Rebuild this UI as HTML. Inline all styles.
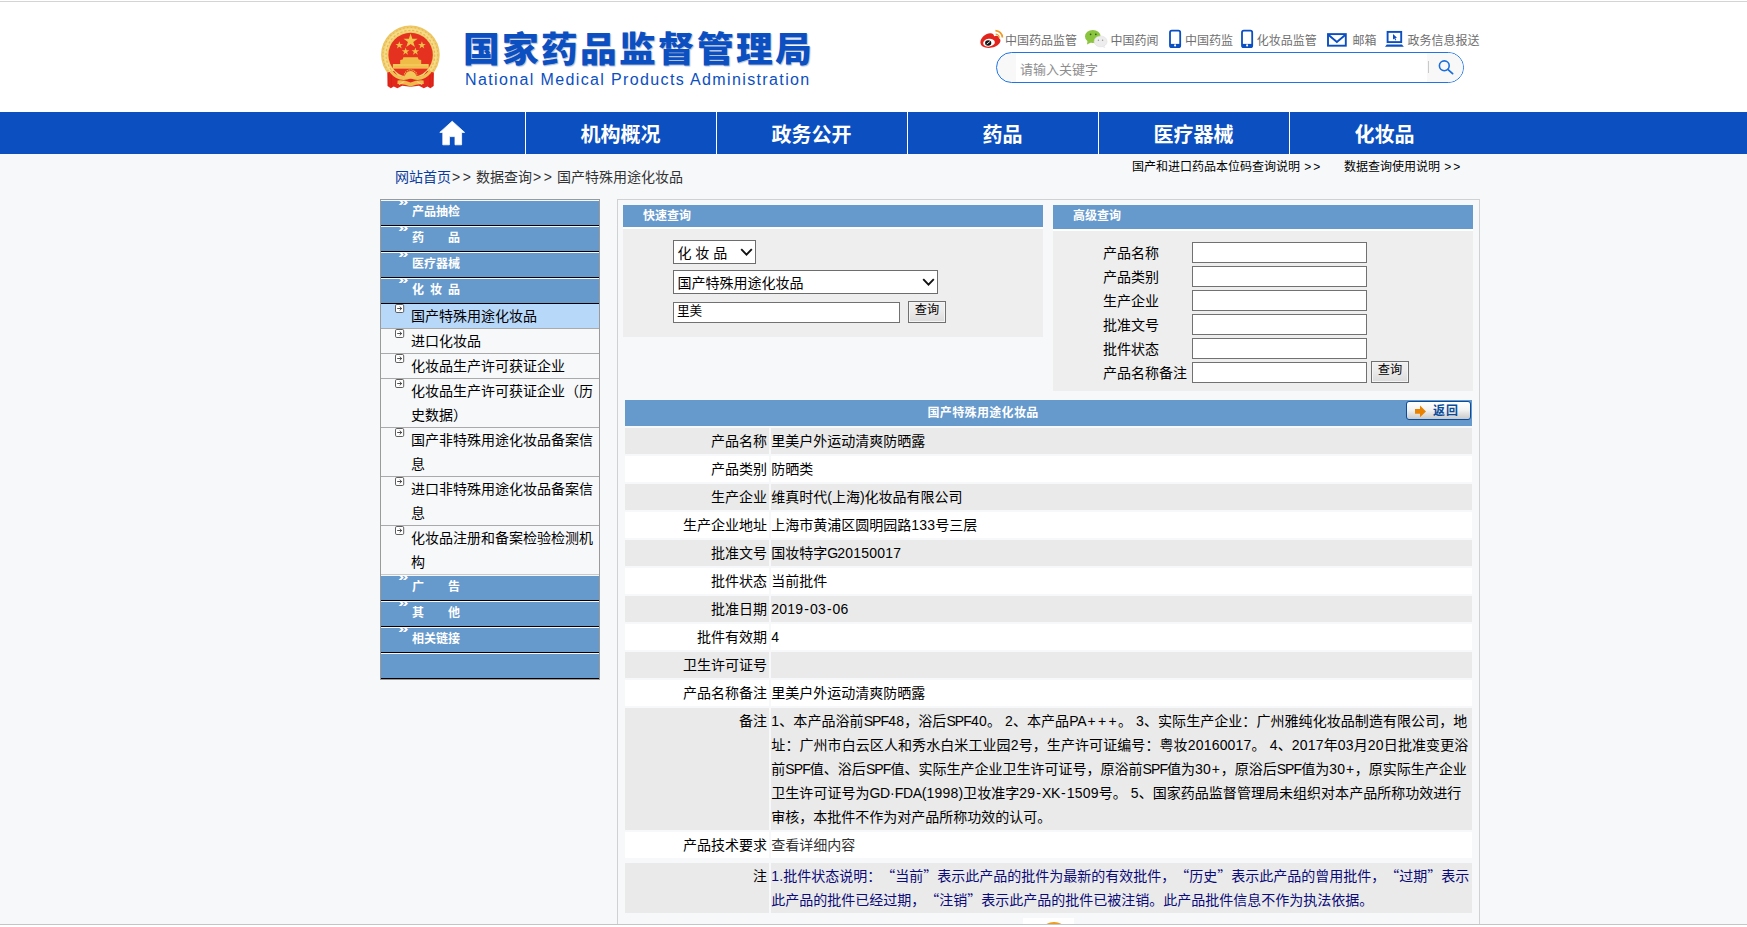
<!DOCTYPE html>
<html lang="zh-CN">
<head>
<meta charset="utf-8">
<title>国家药品监督管理局 数据查询</title>
<style>
*{box-sizing:border-box;margin:0;padding:0}
html,body{width:1747px;height:927px;overflow:hidden;background:#fff}
body{position:relative;text-spacing-trim:space-all;font-family:"Liberation Sans","Noto Sans CJK SC",sans-serif;font-size:14px;color:#000}
.abs{position:absolute}
.t{position:absolute;white-space:nowrap;line-height:1}
#pagebg{left:0;top:154px;width:1747px;height:770px;background:#f6f8fa}
#topline{left:0;top:1px;width:1747px;height:1px;background:#d4d4d4}
#botline{left:0;top:924px;width:1747px;height:1px;background:#c3c5c7}
#botwhite{left:0;top:925px;width:1747px;height:2px;background:#fff}
/* header */
#title{left:463.3px;top:33.1px;font-size:34.8px;font-weight:900;color:#0b4fc1;letter-spacing:2.13px;transform:scaleX(1.056);transform-origin:0 0;text-shadow:1px 1px 1px rgba(11,60,150,.35)}
#etitle{left:465px;top:71.5px;font-size:16px;color:#0b4fc1;letter-spacing:1.37px}
.tl{font-size:12px;color:#6f6f6f;top:34.8px}
#search{left:996px;top:52px;width:468px;height:31px;border:1px solid #1f75e6;border-radius:16px;background:#f8f8f8;overflow:hidden}
#search .in{position:absolute;left:19px;top:0;width:411px;height:29px;background:#fff}
#search .sb{position:absolute;left:430px;top:0;width:40px;height:29px;background:#f8f8f8}
#search .sep{position:absolute;left:431px;top:8px;width:1px;height:12px;background:#c9c9c9}
#ph{left:1020px;top:62.5px;font-size:13px;color:#8e8e8e}
/* nav */
#nav{left:0;top:112px;width:1747px;height:42px;background:#0b4fc1}
.nsep{position:absolute;top:112px;width:1px;height:42px;background:#fff}
.nt{font-size:20px;font-weight:700;color:#fff;top:125px;width:191px;text-align:center}
/* breadcrumb */
#bc{left:395px;top:170px;font-size:14px;color:#333}
#bc u{text-decoration:none;letter-spacing:2.5px;margin-left:1px;margin-right:-1.2px}
#bc b{font-weight:400;color:#0b3b9c}
.rl{font-size:12px;color:#000;top:161px}
.rl u{text-decoration:none;letter-spacing:2px;margin-left:1px}
/* sidebar */
#side{left:380px;top:199px;width:220px;height:481px;border:1px solid #9a9a9a;background:#f6f8fa}
.sh{position:absolute;left:0;width:218px;height:26px;background:#6699cc;border-top:1px solid #f4f7fb;border-bottom:1px solid #000}
.sh i{position:absolute;left:17px;top:-6px;font-style:normal;font-size:13px;font-weight:700;color:#fff;line-height:14px;transform:scale(1.45,.95);transform-origin:0 50%}
.sh span{position:absolute;left:31px;top:4px;font-size:12px;font-weight:700;color:#fff;line-height:14px;white-space:pre}
.si{position:absolute;left:0;width:218px;border-bottom:1px solid #aaa}
.si.on{background:#b8d8fa}
.si svg{position:absolute;left:14px;top:0}
.si span{position:absolute;left:30px;top:0;font-size:14px;line-height:24px;white-space:nowrap}

/* main */
#mainL{left:617px;top:199px;width:1px;height:725px;background:#cfd1d3}
#mainR{left:1479px;top:199px;width:1px;height:725px;background:#cfd1d3}
#mainT{left:617px;top:199px;width:863px;height:1px;background:#cfd1d3}
.ph{position:absolute;background:#6699cc}
.ph span{position:absolute;left:20px;top:4px;font-size:12px;font-weight:700;color:#fff;line-height:14px;white-space:nowrap}
.pb{position:absolute;background:#eee}
.pgap{position:absolute;background:#fff}
.sel{position:absolute;height:24px;background:#fff;border:1px solid #6d6d6d}
.sel span{position:absolute;left:3.4px;top:.6px;line-height:22px;font-size:14px;white-space:pre}
.sel svg{position:absolute;top:7px}
.inp{position:absolute;height:21px;background:#fff;border:1px solid #717171}
.inp span{position:absolute;left:3px;top:0;line-height:17px;font-size:12.6px;white-space:nowrap}
.btn{position:absolute;width:38px;height:22px;background:linear-gradient(#f0f0f0,#ebebeb 45%,#dbdbdb);border:1px solid #707070;box-shadow:inset 0 0 0 1px #f5f5f5;font-size:12.2px;line-height:17px;text-align:center;white-space:nowrap}
.lab{position:absolute;left:1103px;font-size:14px;line-height:24px;white-space:nowrap}
#th{left:625px;top:400px;width:847px;height:26px;background:#6699cc}
#tht{left:927.5px;top:406px;font-size:12px;font-weight:700;color:#fff;line-height:14px;letter-spacing:.35px}
#back{left:1406px;top:401px;width:65px;height:19px;border:1px solid #0a4c9b;border-radius:3px;background:linear-gradient(#ffffff 0%,#f4f4f4 45%,#c9c9c9 100%)}
#back span{position:absolute;left:26px;top:2px;font-size:12px;font-weight:700;color:#0a4c9b;line-height:14px;white-space:nowrap;letter-spacing:1px}
.c{position:absolute;font-size:14px;line-height:24px}
.c.g{background:#eaeaea}.c.w{background:#fff}
.c.l{left:625px;width:144px;text-align:right;padding:1px 2px 0 0;white-space:nowrap}
.c.v{left:771px;width:701px;padding:1px 0 0 .3px;white-space:nowrap}
.k{letter-spacing:-.9px}.d{letter-spacing:.2px}.p{letter-spacing:1.4px;margin-left:.7px;margin-right:-.7px}.k2{letter-spacing:-.3px}.p2{letter-spacing:2.4px;margin-left:1.2px;margin-right:-1.2px}.h{margin:0 1px}
.q{font-family:"Noto Sans CJK SC",sans-serif;line-height:1}
#note{color:#0a0a78}
</style>
</head>
<body>
<div class="abs" id="pagebg"></div>
<div class="abs" id="topline"></div>

<!-- EMBLEM -->
<svg class="abs" style="left:378px;top:22px" width="66" height="70" viewBox="378 22 66 70">
  <defs>
    <radialGradient id="gold" cx="50%" cy="50%" r="50%"><stop offset="0" stop-color="#f3cf66"/><stop offset=".74" stop-color="#f1cb62"/><stop offset=".86" stop-color="#f6df8e"/><stop offset="1" stop-color="#ecc057"/></radialGradient>
  </defs>
  <circle cx="410.4" cy="54.8" r="29.3" fill="url(#gold)"/>
  <circle cx="410.4" cy="54.8" r="27.4" fill="none" stroke="#e6b24a" stroke-width="1.1" stroke-dasharray="1.6 2.2" opacity=".8"/>
  <circle cx="410.4" cy="54.8" r="24.4" fill="none" stroke="#e3ab42" stroke-width="1.2" stroke-dasharray="2.2 1.8" opacity=".75"/>
  <circle cx="410.6" cy="55" r="22.2" fill="#e5311f"/>
  <polygon fill="#f3c54c" points="410.6,33.6 412.3,38.7 417.6,38.7 413.3,41.9 414.9,47 410.6,43.9 406.3,47 407.9,41.9 403.6,38.7 408.9,38.7"/>
  <polygon fill="#f0bf49" points="399.3,41.3 400.3,44 403.1,44 400.8,45.7 401.7,48.4 399.3,46.8 396.9,48.4 397.8,45.7 395.5,44 398.3,44"/>
  <polygon fill="#f0bf49" points="421.9,41.3 422.9,44 425.7,44 423.4,45.7 424.3,48.4 421.9,46.8 419.5,48.4 420.4,45.7 418.1,44 420.9,44"/>
  <polygon fill="#f0bf49" points="405.6,47.6 406.6,50.3 409.4,50.3 407.1,52 408,54.7 405.6,53.1 403.2,54.7 404.1,52 401.8,50.3 404.6,50.3"/>
  <polygon fill="#f0bf49" points="415.4,47.6 416.4,50.3 419.2,50.3 416.9,52 417.8,54.7 415.4,53.1 413,54.7 413.9,52 411.6,50.3 414.4,50.3"/>
  <path d="M403.4 57.2 L417.8 57.2 L418.6 59.6 L421.2 60 L421.2 64.4 L400.2 64.4 L400.2 60 L402.6 59.6 Z" fill="#efbc48"/>
  <rect x="392.9" y="64" width="35.8" height="4.6" fill="#f3c857"/>
  <rect x="394" y="66.6" width="33.6" height=".8" fill="#e9a93c" opacity=".7"/>
  <!-- drape -->
  <path d="M387.3 72.4 L394 71 L398.2 76 L410.6 78.4 L423 76 L427.2 71 L433.9 72.4 L433.7 86 L430.4 88.3 L427.4 86.4 L423.8 88.2 L419 85.8 L410.6 86.8 L402.2 85.8 L397.4 88.2 L393.8 86.4 L390.8 88.3 L387.5 86 Z" fill="#e3271c"/>
  <path d="M391.4 69.4 Q399.5 80 410.6 74.6 Q421.7 80 429.8 69.4 L431.4 72.6 Q422.5 83.4 410.6 78.6 Q398.7 83.4 389.8 72.6 Z" fill="#efc155"/>
  <path d="M404.6 77.6 A6 6.6 0 0 1 416.6 77.6 Z" fill="#f2c85a"/>
  <path d="M404.2 76.4 A6.4 6.6 0 0 1 417 76.4" fill="none" stroke="#eab547" stroke-width="1.3" stroke-dasharray="1.1 .9"/>
  <path d="M397.6 80.4 Q404 79.6 410.6 82.4 Q417.2 79.6 423.6 80.4 L423.8 84 Q417 83.4 410.6 86.4 Q404.2 83.4 397.4 84 Z" fill="#edba4b"/>
  <path d="M399 84.6 L404.4 81.4 M422.2 84.6 L416.8 81.4" stroke="#f5d77e" stroke-width="1.1"/>
  <path d="M388.6 74 L388.8 86 M391.2 75 L391.4 87 M432.6 74 L432.4 86 M430 75 L429.8 87" stroke="#c91d14" stroke-width=".7" opacity=".7"/>
</svg>

<div class="t" id="title">国家药品监督管理局</div>
<div class="t" id="etitle">National Medical Products Administration</div>

<!-- TOP LINKS -->
<svg class="abs" style="left:979px;top:28px" width="26" height="22" viewBox="979 28 26 22">
  <path d="M980.4 42.2 C980.4 37.6 986 33 990.4 33.2 C993 33.3 994.3 34.6 994 36.3 C996.6 35.2 999.3 35.9 999 38.3 C1000.7 39.2 1001 41.2 999.5 43.2 C997.4 46.1 993 47.9 988.6 47.9 C984 47.9 980.4 45.8 980.4 42.2 Z" fill="#e2251c"/>
  <ellipse cx="989" cy="42.7" rx="5.9" ry="3.9" fill="#fff" transform="rotate(-8 989 42.7)"/>
  <ellipse cx="988.2" cy="43" rx="3.1" ry="2.7" fill="#111"/>
  <path d="M987 43.8 L989.6 41.8" stroke="#fff" stroke-width=".9" stroke-linecap="round"/>
  <path d="M995.6 34.2 A3.6 3.6 0 0 1 999.2 37.8" fill="none" stroke="#f29a1f" stroke-width="1.3"/>
  <path d="M995.4 30.6 A7.2 7.2 0 0 1 1002.4 37.6" fill="none" stroke="#f29a1f" stroke-width="1.7"/>
</svg>
<div class="t tl" style="left:1005px">中国药品监管</div>
<svg class="abs" style="left:1084px;top:28px" width="26" height="22" viewBox="1084 28 26 22">
  <ellipse cx="1092.8" cy="36.4" rx="7.8" ry="6.5" fill="#8bc53f"/>
  <path d="M1087.6 40.6 L1087 44.4 L1091 42.4 Z" fill="#8bc53f"/>
  <ellipse cx="1100.6" cy="41.4" rx="6.5" ry="5.5" fill="#ededed" stroke="#dcdcdc" stroke-width=".5"/>
  <path d="M1104 45.5 L1105.6 48.2 L1101.6 46.8 Z" fill="#e9e9e9"/>
  <circle cx="1090.6" cy="34.3" r="0.85" fill="#2f5d0e"/><circle cx="1095.8" cy="34.3" r="0.85" fill="#2f5d0e"/>
  <circle cx="1098.4" cy="40.2" r="0.7" fill="#999"/><circle cx="1102.6" cy="40.2" r="0.7" fill="#999"/>
</svg>
<div class="t tl" style="left:1110.5px">中国药闻</div>
<svg class="abs" style="left:1168px;top:29px" width="14" height="20" viewBox="1168 29 14 20">
  <rect x="1170" y="30.6" width="10.2" height="16.6" rx="1.8" fill="#fff" stroke="#0b4fc1" stroke-width="1.8"/>
  <rect x="1170" y="43.9" width="10.2" height="3.3" fill="#0b4fc1"/><circle cx="1175.1" cy="45.4" r="1.05" fill="#fff"/>
</svg>
<div class="t tl" style="left:1185px">中国药监</div>
<svg class="abs" style="left:1240px;top:29px" width="14" height="20" viewBox="1240 29 14 20">
  <rect x="1242" y="30.6" width="10.2" height="16.6" rx="1.8" fill="#fff" stroke="#0b4fc1" stroke-width="1.8"/>
  <rect x="1242" y="43.9" width="10.2" height="3.3" fill="#0b4fc1"/><circle cx="1247.1" cy="45.4" r="1.05" fill="#fff"/>
</svg>
<div class="t tl" style="left:1256.8px">化妆品监管</div>
<svg class="abs" style="left:1326px;top:32px" width="22" height="16" viewBox="1326 32 22 16">
  <rect x="1328" y="34.1" width="17.8" height="11.6" fill="#fff" stroke="#0b4fc1" stroke-width="1.9"/>
  <path d="M1328.6 35 L1336.9 42 L1345.2 35" fill="none" stroke="#0b4fc1" stroke-width="1.9"/>
</svg>
<div class="t tl" style="left:1352.4px">邮箱</div>
<svg class="abs" style="left:1384px;top:30px" width="21" height="18" viewBox="1384 30 21 18">
  <rect x="1387.6" y="31.9" width="13.6" height="10.2" fill="#fff" stroke="#0b4fc1" stroke-width="1.9"/>
  <path d="M1385 46.8 L1403.8 46.8 L1402 44.4 L1386.8 44.4 Z" fill="#0b4fc1"/>
  <path d="M1393 34 L1393 39.6 L1394.4 38.4 L1395.4 40.4 L1396.2 40 L1395.3 38 L1397 37.8 Z" fill="#0b4fc1"/>
</svg>
<div class="t tl" style="left:1407.6px">政务信息报送</div>

<div class="abs" id="search"><div class="in"></div><div class="sb"></div><div class="sep"></div></div>
<div class="t" id="ph">请输入关键字</div>
<svg class="abs" style="left:1436px;top:58px" width="20" height="18" viewBox="1436 58 20 18">
  <circle cx="1444.3" cy="65.8" r="4.9" fill="none" stroke="#1a6fdc" stroke-width="1.6"/>
  <path d="M1447.8 69.4 L1452.6 73.6" stroke="#1a6fdc" stroke-width="1.8" stroke-linecap="round"/>
</svg>

<!-- NAV -->
<div class="abs" id="nav"></div>
<div class="nsep" style="left:525px"></div><div class="nsep" style="left:716px"></div><div class="nsep" style="left:907px"></div><div class="nsep" style="left:1098px"></div><div class="nsep" style="left:1289px"></div>
<svg class="abs" style="left:438px;top:119px" width="28" height="28" viewBox="438 119 28 28">
  <path d="M452.2 121.2 L464.6 132.4 L461.6 132.4 L461.6 144.8 L455 144.8 L455 136.6 L449.4 136.6 L449.4 144.8 L442.8 144.8 L442.8 132.4 L439.8 132.4 Z" fill="#fff" stroke="#fff" stroke-width="0.8" stroke-linejoin="round"/>
</svg>
<div class="t nt" style="left:525px">机构概况</div>
<div class="t nt" style="left:716px">政务公开</div>
<div class="t nt" style="left:907px">药品</div>
<div class="t nt" style="left:1098px">医疗器械</div>
<div class="t nt" style="left:1289px">化妆品</div>

<!-- BREADCRUMB -->
<div class="t" id="bc"><b>网站首页</b><u>&gt;&gt;</u> 数据查询<u>&gt;&gt;</u> 国产特殊用途化妆品</div>
<div class="t rl" style="left:1132px">国产和进口药品本位码查询说明 <u>&gt;&gt;</u></div>
<div class="t rl" style="left:1344px">数据查询使用说明 <u>&gt;&gt;</u></div>

<!-- SIDEBAR -->
<div class="abs" id="side">
  <div class="sh" style="top:0"><i>»</i><span>产品抽检</span></div>
  <div class="sh" style="top:26px"><i>»</i><span>药　　品</span></div>
  <div class="sh" style="top:52px"><i>»</i><span>医疗器械</span></div>
  <div class="sh" style="top:78px"><i>»</i><span>化&ensp;妆&ensp;品</span></div>
  <div class="si on" style="top:104px;height:25px"><svg width="10" height="10" viewBox="0 0 10 10"><rect x=".5" y=".5" width="8.2" height="8" rx="1.3" fill="#fff" stroke="#4d4d4d" stroke-width=".9"/><path d="M2.2 4.5 H6.6 M4.7 2.6 L6.7 4.5 L4.7 6.4" fill="none" stroke="#2e2e2e" stroke-width=".85"/></svg><span>国产特殊用途化妆品</span></div>
  <div class="si" style="top:129px;height:25px"><svg width="10" height="10" viewBox="0 0 10 10"><rect x=".5" y=".5" width="8.2" height="8" rx="1.3" fill="#fff" stroke="#4d4d4d" stroke-width=".9"/><path d="M2.2 4.5 H6.6 M4.7 2.6 L6.7 4.5 L4.7 6.4" fill="none" stroke="#2e2e2e" stroke-width=".85"/></svg><span>进口化妆品</span></div>
  <div class="si" style="top:154px;height:25px"><svg width="10" height="10" viewBox="0 0 10 10"><rect x=".5" y=".5" width="8.2" height="8" rx="1.3" fill="#fff" stroke="#4d4d4d" stroke-width=".9"/><path d="M2.2 4.5 H6.6 M4.7 2.6 L6.7 4.5 L4.7 6.4" fill="none" stroke="#2e2e2e" stroke-width=".85"/></svg><span>化妆品生产许可获证企业</span></div>
  <div class="si" style="top:179px;height:49px"><svg width="10" height="10" viewBox="0 0 10 10"><rect x=".5" y=".5" width="8.2" height="8" rx="1.3" fill="#fff" stroke="#4d4d4d" stroke-width=".9"/><path d="M2.2 4.5 H6.6 M4.7 2.6 L6.7 4.5 L4.7 6.4" fill="none" stroke="#2e2e2e" stroke-width=".85"/></svg><span>化妆品生产许可获证企业（历<br>史数据）</span></div>
  <div class="si" style="top:228px;height:49px"><svg width="10" height="10" viewBox="0 0 10 10"><rect x=".5" y=".5" width="8.2" height="8" rx="1.3" fill="#fff" stroke="#4d4d4d" stroke-width=".9"/><path d="M2.2 4.5 H6.6 M4.7 2.6 L6.7 4.5 L4.7 6.4" fill="none" stroke="#2e2e2e" stroke-width=".85"/></svg><span>国产非特殊用途化妆品备案信<br>息</span></div>
  <div class="si" style="top:277px;height:49px"><svg width="10" height="10" viewBox="0 0 10 10"><rect x=".5" y=".5" width="8.2" height="8" rx="1.3" fill="#fff" stroke="#4d4d4d" stroke-width=".9"/><path d="M2.2 4.5 H6.6 M4.7 2.6 L6.7 4.5 L4.7 6.4" fill="none" stroke="#2e2e2e" stroke-width=".85"/></svg><span>进口非特殊用途化妆品备案信<br>息</span></div>
  <div class="si" style="top:326px;height:49px;border-bottom-color:#c9c9c9"><svg width="10" height="10" viewBox="0 0 10 10"><rect x=".5" y=".5" width="8.2" height="8" rx="1.3" fill="#fff" stroke="#4d4d4d" stroke-width=".9"/><path d="M2.2 4.5 H6.6 M4.7 2.6 L6.7 4.5 L4.7 6.4" fill="none" stroke="#2e2e2e" stroke-width=".85"/></svg><span>化妆品注册和备案检验检测机<br>构</span></div>
  <div class="sh" style="top:375px"><i>»</i><span>广　　告</span></div>
  <div class="sh" style="top:401px"><i>»</i><span>其　　他</span></div>
  <div class="sh" style="top:427px"><i>»</i><span>相关链接</span></div>
  <div class="sh" style="top:453px"></div>
</div>

<!--MAIN-->
<div class="abs" id="mainT"></div><div class="abs" id="mainL"></div><div class="abs" id="mainR"></div>
<div class="ph" style="left:623px;top:205px;width:420px;height:22px"><span>快速查询</span></div>
<div class="pgap" style="left:623px;top:227px;width:420px;height:2px"></div>
<div class="pb" style="left:623px;top:229px;width:420px;height:108px"></div>
<div class="sel" style="left:673px;top:240px;width:83px"><span>化 妆 品</span><svg width="13" height="9" viewBox="0 0 13 9" style="left:66px"><path d="M1.2 1.2 L6.5 6.6 L11.8 1.2" fill="none" stroke="#111" stroke-width="1.9"/></svg></div>
<div class="sel" style="left:673px;top:270px;width:265px"><span>国产特殊用途化妆品</span><svg width="13" height="9" viewBox="0 0 13 9" style="left:248px"><path d="M1.2 1.2 L6.5 6.6 L11.8 1.2" fill="none" stroke="#111" stroke-width="1.9"/></svg></div>
<div class="inp" style="left:673px;top:302px;width:227px"><span>里美</span></div>
<div class="btn" style="left:908px;top:301px">查询</div>
<div class="ph" style="left:1053px;top:205px;width:420px;height:24px"><span>高级查询</span></div>
<div class="pgap" style="left:1053px;top:229px;width:420px;height:2px"></div>
<div class="pb" style="left:1053px;top:231px;width:420px;height:160px"></div>
<div class="lab" style="top:241px">产品名称</div>
<div class="inp" style="left:1192px;top:242px;width:175px"></div>
<div class="lab" style="top:265px">产品类别</div>
<div class="inp" style="left:1192px;top:266px;width:175px"></div>
<div class="lab" style="top:289px">生产企业</div>
<div class="inp" style="left:1192px;top:290px;width:175px"></div>
<div class="lab" style="top:313px">批准文号</div>
<div class="inp" style="left:1192px;top:314px;width:175px"></div>
<div class="lab" style="top:337px">批件状态</div>
<div class="inp" style="left:1192px;top:338px;width:175px"></div>
<div class="lab" style="top:361px">产品名称备注</div>
<div class="inp" style="left:1192px;top:362px;width:175px"></div>
<div class="btn" style="left:1371px;top:361px">查询</div>
<div class="abs" id="th"></div><div class="t" id="tht">国产特殊用途化妆品</div>
<div class="abs" id="back"><svg class="abs" style="left:7px;top:3px" width="13" height="13" viewBox="0 0 13 13"><path d="M1 4 L6 4 L6 0.6 L12 6.4 L6 12.2 L6 8.8 L1 8.8 Z" fill="#ea8200"/></svg><span>返回</span></div>
<div class="c l g" style="top:428px;height:26px">产品名称</div><div class="c v g" style="top:428px;height:26px">里美户外运动清爽防晒露</div>
<div class="c l w" style="top:456px;height:26px">产品类别</div><div class="c v w" style="top:456px;height:26px">防晒类</div>
<div class="c l g" style="top:484px;height:26px">生产企业</div><div class="c v g" style="top:484px;height:26px">维真时代(上海)化妆品有限公司</div>
<div class="c l w" style="top:512px;height:26px">生产企业地址</div><div class="c v w" style="top:512px;height:26px">上海市黄浦区圆明园路<span class="d">133</span>号三层</div>
<div class="c l g" style="top:540px;height:26px">批准文号</div><div class="c v g" style="top:540px;height:26px">国妆特字<span class="k">G</span><span class="d">20150017</span></div>
<div class="c l w" style="top:568px;height:26px">批件状态</div><div class="c v w" style="top:568px;height:26px">当前批件</div>
<div class="c l g" style="top:596px;height:26px">批准日期</div><div class="c v g" style="top:596px;height:26px"><span class="d">2019</span><span class="h">-</span><span class="d">03</span><span class="h">-</span><span class="d">06</span></div>
<div class="c l w" style="top:624px;height:26px">批件有效期</div><div class="c v w" style="top:624px;height:26px"><span class="d">4</span></div>
<div class="c l g" style="top:652px;height:26px">卫生许可证号</div><div class="c v g" style="top:652px;height:26px"></div>
<div class="c l w" style="top:680px;height:26px">产品名称备注</div><div class="c v w" style="top:680px;height:26px">里美户外运动清爽防晒露</div>
<div class="c l g" style="top:708px;height:122px">备注</div><div class="c v g" style="top:708px;height:122px"><span style="letter-spacing:0.060px"><span class="d">1</span>、本产品浴前<span class="k">SPF</span><span class="d">48</span>，浴后<span class="k">SPF</span><span class="d">40</span>。 <span class="d">2</span>、本产品<span class="k2">PA</span><span class="p2">+++</span>。 <span class="d">3</span>、实际生产企业：广州雅纯化妆品制造有限公司，地</span><br><span style="letter-spacing:0.082px">址：广州市白云区人和秀水白米工业园<span class="d">2</span>号，生产许可证编号：粤妆<span class="d">20160017</span>。 <span class="d">4</span>、<span class="d">2017</span>年<span class="d">03</span>月<span class="d">20</span>日批准变更浴</span><br><span style="letter-spacing:0.006px">前<span class="k">SPF</span>值、浴后<span class="k">SPF</span>值、实际生产企业卫生许可证号，原浴前<span class="k">SPF</span>值为<span class="d">30</span><span class="p">+</span>，原浴后<span class="k">SPF</span>值为<span class="d">30</span><span class="p">+</span>，原实际生产企业</span><br><span style="letter-spacing:0.032px">卫生许可证号为<span class="k2">GD</span>·<span class="k2">FDA</span>(<span class="d">1998</span>)卫妆准字<span class="d">29</span><span class="h">-</span><span class="k2">XK</span><span class="h">-</span><span class="d">1509</span>号。 <span class="d">5</span>、国家药品监督管理局未组织对本产品所称功效进行</span><br>审核，本批件不作为对产品所称功效的认可。</div>
<div class="c l w" style="top:832px;height:26px">产品技术要求</div><div class="c v w" style="top:832px;height:26px;color:#333">查看详细内容</div>
<div class="c l g" style="top:863px;height:50px">注</div><div class="c v g" id="note" style="top:863px;height:50px"><span class="d">1</span>.批件状态说明：<span class="q">“</span>当前<span class="q">”</span>表示此产品的批件为最新的有效批件，<span class="q">“</span>历史<span class="q">”</span>表示此产品的曾用批件，<span class="q">“</span>过期<span class="q">”</span>表示<br>此产品的批件已经过期，<span class="q">“</span>注销<span class="q">”</span>表示此产品的批件已被注销。此产品批件信息不作为执法依据。</div>
<div class="abs" style="left:1023px;top:918px;width:51px;height:6px;background:#fff;overflow:hidden"><div class="abs" style="left:21px;top:4px;width:20px;height:12px;border-radius:50%;background:#ee9a1c"></div></div>

<div class="abs" id="botline"></div>
<div class="abs" id="botwhite"></div>
</body>
</html>
